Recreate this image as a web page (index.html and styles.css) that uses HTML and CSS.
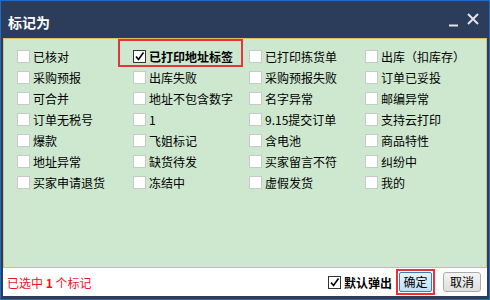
FILE: index.html
```html
<!doctype html>
<html lang="zh-CN">
    <head>
        <meta charset="UTF-8" />
        <title>标记为</title>
        <link rel="stylesheet" href="styles.css">
    </head>
    <body>
        <div class="window">
            <div class="titlebar">
                <span class="title">标记为</span>
                <span class="controls">
                    <svg class="min" width="9" height="3" viewBox="0 0 9 3"><rect x="0" y="0.5" width="9" height="2" fill="#dfe3ea"/></svg>
                    <svg class="close" width="12" height="12" viewBox="0 0 12 12"><path d="M1 1 L11 11 M11 1 L1 11" stroke="#dfe3ea" stroke-width="2"/></svg>
                </span>
            </div>

            <div class="panel">
                <div class="tags">
                    <label class="tag"><span class="box"></span>已核对</label>
                    <label class="tag selected"><span class="box checked"><svg width="11" height="11" viewBox="0 0 11 11"><path d="M2 5.5 L4.5 8.5 L9.5 1.5" fill="none" stroke="#000" stroke-width="1.6"/></svg></span>已打印地址标签<span class="mark"></span></label>
                    <label class="tag"><span class="box"></span>已打印拣货单</label>
                    <label class="tag"><span class="box"></span>出库（扣库存）</label>

                    <label class="tag"><span class="box"></span>采购预报</label>
                    <label class="tag"><span class="box"></span>出库失败</label>
                    <label class="tag"><span class="box"></span>采购预报失败</label>
                    <label class="tag"><span class="box"></span>订单已妥投</label>

                    <label class="tag"><span class="box"></span>可合并</label>
                    <label class="tag"><span class="box"></span>地址不包含数字</label>
                    <label class="tag"><span class="box"></span>名字异常</label>
                    <label class="tag"><span class="box"></span>邮编异常</label>

                    <label class="tag"><span class="box"></span>订单无税号</label>
                    <label class="tag"><span class="box"></span>1</label>
                    <label class="tag"><span class="box"></span>9.15提交订单</label>
                    <label class="tag"><span class="box"></span>支持云打印</label>

                    <label class="tag"><span class="box"></span>爆款</label>
                    <label class="tag"><span class="box"></span>飞姐标记</label>
                    <label class="tag"><span class="box"></span>含电池</label>
                    <label class="tag"><span class="box"></span>商品特性</label>

                    <label class="tag"><span class="box"></span>地址异常</label>
                    <label class="tag"><span class="box"></span>缺货待发</label>
                    <label class="tag"><span class="box"></span>买家留言不符</label>
                    <label class="tag"><span class="box"></span>纠纷中</label>

                    <label class="tag"><span class="box"></span>买家申请退货</label>
                    <label class="tag"><span class="box"></span>冻结中</label>
                    <label class="tag"><span class="box"></span>虚假发货</label>
                    <label class="tag"><span class="box"></span>我的</label>
                </div>
            </div>

            <div class="footer">
                <span class="count">已选中 <b>1</b> 个标记</span>
                <span class="actions">
                    <label class="default">
                        <span class="box checked dark"><svg width="11" height="11" viewBox="0 0 11 11"><path d="M2 5.5 L4.5 8.5 L9.5 1.5" fill="none" stroke="#000" stroke-width="1.6"/></svg></span>默认弹出
                    </label>
                    <span class="focus"><button class="button primary">确定</button></span>
                    <button class="button">取消</button>
                </span>
            </div>
        </div>
    </body>
</html>
```

FILE: styles.css
```css
body {
    margin: 0;
    font-family: "Noto Sans CJK SC", "Noto Sans", sans-serif;
    font-size: 12px;
    color: #000;
}
.window {
    width: 490px;
    height: 300px;
    box-sizing: border-box;
    border: 1px solid #1c6ccc;
    background-color: #2c3d5b;
    padding-bottom: 3px;
    display: flex;
    flex-direction: column;
}
.titlebar {
    height: 37px;
    box-sizing: border-box;
    padding: 4px 10px 0 7px;
    display: flex;
    align-items: center;
    justify-content: space-between;
}
.title {
    color: #fff;
    font-size: 14px;
    font-weight: bold;
}
.controls {
    display: flex;
    align-items: center;
    gap: 9px;
    margin-top: -1px;
}
.controls .min {
    margin-top: 8px;
}
.controls .close {
    margin-top: -5px;
}
.panel {
    margin: 0 2px;
    height: 230px;
    box-sizing: border-box;
    border: 1px solid #e2bd63;
    background-color: #cde8cf;
}
.tags {
    display: grid;
    grid-template-columns: repeat(4, 116px);
    grid-auto-rows: 21px;
    padding: 7px 0 0 13px;
}
.tag {
    position: relative;
    display: flex;
    align-items: center;
    gap: 3px;
    white-space: nowrap;
}
.tag.selected {
    font-weight: bold;
}
.mark {
    position: absolute;
    left: -15px;
    top: -7px;
    width: 125px;
    height: 28px;
    box-sizing: border-box;
    border: 2px solid #e8333a;
}
.box {
    width: 13px;
    height: 13px;
    box-sizing: border-box;
    border: 1px solid #c9c9c9;
    background-color: #fff;
    display: flex;
    align-items: center;
    justify-content: center;
    flex-shrink: 0;
}
.box.checked {
    border-color: #333;
}
.footer {
    flex: 1;
    margin: 0 2px;
    background-color: #fff;
    display: flex;
    align-items: center;
    justify-content: space-between;
    padding: 0 6px 0 4px;
}
.count {
    color: #f0111c;
}
.count b {
    font-weight: bold;
}
.actions {
    display: flex;
    align-items: center;
}
.default {
    display: flex;
    align-items: center;
    gap: 3px;
    font-weight: bold;
    margin-right: 4px;
}
.focus {
    border: 2px solid #e8333a;
    padding: 1px;
    display: flex;
    margin-right: 8px;
}
.button {
    font-family: "Noto Sans CJK SC", sans-serif;
    font-size: 12px;
    color: #000;
    height: 20px;
    width: 38px;
    padding: 0;
    border: 1px solid #acacac;
    border-radius: 3px;
    background: linear-gradient(#f4f4f4, #dedede);
    line-height: 18px;
}
.button.primary {
    width: 33px;
    border-color: #3c7fb1;
    border-radius: 2px;
    background: linear-gradient(#e6f3fc, #bfdff5);
}
```
